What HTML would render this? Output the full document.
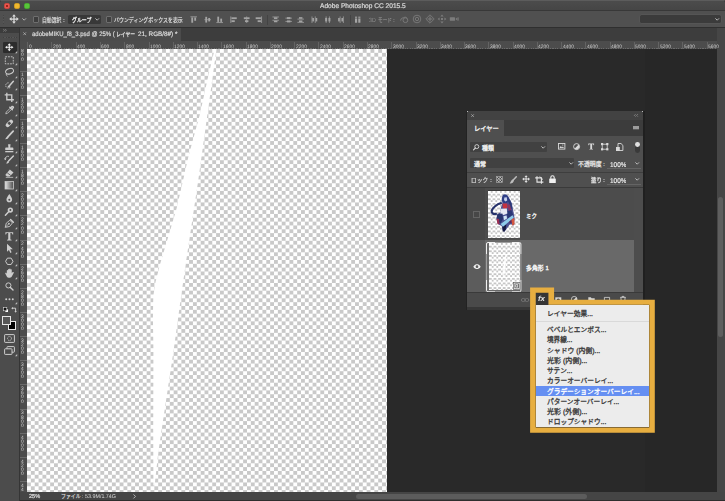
<!DOCTYPE html>
<html lang="ja"><head><meta charset="utf-8"><title>Adobe Photoshop CC 2015.5</title>
<style>
html,body{margin:0;padding:0;width:725px;height:501px;overflow:hidden;background:#272727}
#app{position:absolute;left:0;top:0;width:725px;height:501px;overflow:hidden;background:#272727;font-family:"Liberation Sans",sans-serif}
.b,.jp,.lt,.ic{position:absolute;display:block}
.jp{overflow:visible}
.jp text{font-family:"Liberation Sans","Noto Sans CJK JP",sans-serif;font-size:1000px;font-weight:400}
.lt{white-space:pre;letter-spacing:0;transform-origin:0 0;text-rendering:geometricPrecision;font-kerning:none;will-change:transform}
.ic{overflow:visible;fill:none;stroke:none}
.ck{background:conic-gradient(#c9c9c9 25%,#fff 0 50%,#c9c9c9 0 75%,#fff 0);background-size:7.72px 7.68px}
</style></head>
<body>
<div id="app">
<style>.ck2{background:conic-gradient(#c6c6c6 25%,#fff 0 50%,#c6c6c6 0 75%,#fff 0);background-size:4.6px 4.6px}</style>
<div class="b" style="left:387.10px;top:49.00px;width:258.40px;height:443.00px;background:#292929;"></div>
<div class="b" style="left:645.50px;top:49.00px;width:71.50px;height:443.00px;background:#272727;"></div>
<div class="b" style="left:717.00px;top:27.60px;width:8.00px;height:473.40px;background:#464646;"></div>
<div class="b" style="left:19.50px;top:491.70px;width:705.50px;height:8.60px;background:#454545;"></div>
<div class="b" style="left:0.00px;top:500.20px;width:725.00px;height:0.80px;background:#2e2e2e;"></div>
<div class="b" style="left:355.80px;top:494.00px;width:231.00px;height:5.20px;background:#5c5c5c;border-radius:2.6px"></div>
<div class="b" style="left:718.00px;top:197.00px;width:5.00px;height:140.00px;background:#5e5e5e;border-radius:2.5px"></div>
<span class="lt" style="left:29.00px;top:492.52px;font-size:58.0px;line-height:69.6px;color:#e0e0e0;font-weight:400;transform:scale(0.09647,0.100);-webkit-text-stroke:2.00px #e0e0e0;">25%</span>
<svg class="jp" role="img" aria-label="ファイル" viewBox="0 -880 4000 1000" preserveAspectRatio="none" style="left:61.00px;top:493.30px;width:19.60px;height:5.40px;fill:#d8d8d8;stroke:#d8d8d8;stroke-width:35"><title>ファイル</title><text x="0" y="0" textLength="4000" lengthAdjust="spacingAndGlyphs">ファイル</text></svg>
<span class="lt" style="left:82.20px;top:492.64px;font-size:56.0px;line-height:67.2px;color:#d8d8d8;font-weight:400;transform:scale(0.09581,0.100);">: 53.9M/1.74G</span>
<svg class="ic" viewBox="0 0 3 4.8" style="left:133.40px;top:493.60px;width:3.00px;height:4.80px;"><path d="M.5.4 2.5 2.4 .5 4.4" stroke="#d0d0d0" stroke-width=".8"/></svg>
<div class="b ck" style="left:27.1px;top:49px;width:359.8px;height:442.8px"></div>
<svg class="ic" viewBox="27.1 49 359.8 442.8" style="left:27.10px;top:49.00px;width:359.80px;height:442.80px;"><path fill="#fff" d="M214.8 49H216.6L198.4 180 186.4 260 180.4 302 173.8 350 162.3 426 158.3 453 156 474 154.7 485.5 153.5 485.5 153.3 430 153.5 350 153 318 153.4 296 155.6 282 160.2 264 168.6 236 176.8 208 182.8 182 188.4 157 199.8 115 208.6 75Z"/></svg>
<div class="b" style="left:19.50px;top:41.00px;width:697.50px;height:8.00px;background:#4c4c4c;"></div>
<div class="b" style="left:19.50px;top:48.40px;width:697.50px;height:0.80px;background:repeating-linear-gradient(90deg,#6c6c6c 0 1.2px,#4c4c4c 1.2px 2.42px);"></div>
<div class="b" style="left:27.20px;top:41.50px;width:0.70px;height:7.20px;background:#636363;"></div>
<span class="lt" style="left:28.60px;top:43.36px;font-size:49.0px;line-height:58.8px;color:#cdcdcd;font-weight:400;transform:scale(0.10000,0.100);">0</span>
<div class="b" style="left:51.47px;top:41.50px;width:0.70px;height:7.20px;background:#636363;"></div>
<span class="lt" style="left:52.87px;top:43.36px;font-size:49.0px;line-height:58.8px;color:#cdcdcd;font-weight:400;transform:scale(0.10000,0.100);">200</span>
<div class="b" style="left:75.74px;top:41.50px;width:0.70px;height:7.20px;background:#636363;"></div>
<span class="lt" style="left:77.14px;top:43.36px;font-size:49.0px;line-height:58.8px;color:#cdcdcd;font-weight:400;transform:scale(0.10000,0.100);">400</span>
<div class="b" style="left:100.01px;top:41.50px;width:0.70px;height:7.20px;background:#636363;"></div>
<span class="lt" style="left:101.41px;top:43.36px;font-size:49.0px;line-height:58.8px;color:#cdcdcd;font-weight:400;transform:scale(0.10000,0.100);">600</span>
<div class="b" style="left:124.28px;top:41.50px;width:0.70px;height:7.20px;background:#636363;"></div>
<span class="lt" style="left:125.68px;top:43.36px;font-size:49.0px;line-height:58.8px;color:#cdcdcd;font-weight:400;transform:scale(0.10000,0.100);">800</span>
<div class="b" style="left:148.55px;top:41.50px;width:0.70px;height:7.20px;background:#636363;"></div>
<span class="lt" style="left:149.95px;top:43.36px;font-size:49.0px;line-height:58.8px;color:#cdcdcd;font-weight:400;transform:scale(0.10000,0.100);">1000</span>
<div class="b" style="left:172.82px;top:41.50px;width:0.70px;height:7.20px;background:#636363;"></div>
<span class="lt" style="left:174.22px;top:43.36px;font-size:49.0px;line-height:58.8px;color:#cdcdcd;font-weight:400;transform:scale(0.10000,0.100);">1200</span>
<div class="b" style="left:197.09px;top:41.50px;width:0.70px;height:7.20px;background:#636363;"></div>
<span class="lt" style="left:198.49px;top:43.36px;font-size:49.0px;line-height:58.8px;color:#cdcdcd;font-weight:400;transform:scale(0.10000,0.100);">1400</span>
<div class="b" style="left:221.36px;top:41.50px;width:0.70px;height:7.20px;background:#636363;"></div>
<span class="lt" style="left:222.76px;top:43.36px;font-size:49.0px;line-height:58.8px;color:#cdcdcd;font-weight:400;transform:scale(0.10000,0.100);">1600</span>
<div class="b" style="left:245.63px;top:41.50px;width:0.70px;height:7.20px;background:#636363;"></div>
<span class="lt" style="left:247.03px;top:43.36px;font-size:49.0px;line-height:58.8px;color:#cdcdcd;font-weight:400;transform:scale(0.10000,0.100);">1800</span>
<div class="b" style="left:269.90px;top:41.50px;width:0.70px;height:7.20px;background:#636363;"></div>
<span class="lt" style="left:271.30px;top:43.36px;font-size:49.0px;line-height:58.8px;color:#cdcdcd;font-weight:400;transform:scale(0.10000,0.100);">2000</span>
<div class="b" style="left:294.17px;top:41.50px;width:0.70px;height:7.20px;background:#636363;"></div>
<span class="lt" style="left:295.57px;top:43.36px;font-size:49.0px;line-height:58.8px;color:#cdcdcd;font-weight:400;transform:scale(0.10000,0.100);">2200</span>
<div class="b" style="left:318.44px;top:41.50px;width:0.70px;height:7.20px;background:#636363;"></div>
<span class="lt" style="left:319.84px;top:43.36px;font-size:49.0px;line-height:58.8px;color:#cdcdcd;font-weight:400;transform:scale(0.10000,0.100);">2400</span>
<div class="b" style="left:342.71px;top:41.50px;width:0.70px;height:7.20px;background:#636363;"></div>
<span class="lt" style="left:344.11px;top:43.36px;font-size:49.0px;line-height:58.8px;color:#cdcdcd;font-weight:400;transform:scale(0.10000,0.100);">2600</span>
<div class="b" style="left:366.98px;top:41.50px;width:0.70px;height:7.20px;background:#636363;"></div>
<span class="lt" style="left:368.38px;top:43.36px;font-size:49.0px;line-height:58.8px;color:#cdcdcd;font-weight:400;transform:scale(0.10000,0.100);">2800</span>
<div class="b" style="left:391.25px;top:41.50px;width:0.70px;height:7.20px;background:#636363;"></div>
<span class="lt" style="left:392.65px;top:43.36px;font-size:49.0px;line-height:58.8px;color:#cdcdcd;font-weight:400;transform:scale(0.10000,0.100);">3000</span>
<div class="b" style="left:415.52px;top:41.50px;width:0.70px;height:7.20px;background:#636363;"></div>
<span class="lt" style="left:416.92px;top:43.36px;font-size:49.0px;line-height:58.8px;color:#cdcdcd;font-weight:400;transform:scale(0.10000,0.100);">3200</span>
<div class="b" style="left:439.79px;top:41.50px;width:0.70px;height:7.20px;background:#636363;"></div>
<span class="lt" style="left:441.19px;top:43.36px;font-size:49.0px;line-height:58.8px;color:#cdcdcd;font-weight:400;transform:scale(0.10000,0.100);">3400</span>
<div class="b" style="left:464.06px;top:41.50px;width:0.70px;height:7.20px;background:#636363;"></div>
<span class="lt" style="left:465.46px;top:43.36px;font-size:49.0px;line-height:58.8px;color:#cdcdcd;font-weight:400;transform:scale(0.10000,0.100);">3600</span>
<div class="b" style="left:488.33px;top:41.50px;width:0.70px;height:7.20px;background:#636363;"></div>
<span class="lt" style="left:489.73px;top:43.36px;font-size:49.0px;line-height:58.8px;color:#cdcdcd;font-weight:400;transform:scale(0.10000,0.100);">3800</span>
<div class="b" style="left:512.60px;top:41.50px;width:0.70px;height:7.20px;background:#636363;"></div>
<span class="lt" style="left:514.00px;top:43.36px;font-size:49.0px;line-height:58.8px;color:#cdcdcd;font-weight:400;transform:scale(0.10000,0.100);">4000</span>
<div class="b" style="left:536.87px;top:41.50px;width:0.70px;height:7.20px;background:#636363;"></div>
<span class="lt" style="left:538.27px;top:43.36px;font-size:49.0px;line-height:58.8px;color:#cdcdcd;font-weight:400;transform:scale(0.10000,0.100);">4200</span>
<div class="b" style="left:561.14px;top:41.50px;width:0.70px;height:7.20px;background:#636363;"></div>
<span class="lt" style="left:562.54px;top:43.36px;font-size:49.0px;line-height:58.8px;color:#cdcdcd;font-weight:400;transform:scale(0.10000,0.100);">4400</span>
<div class="b" style="left:585.41px;top:41.50px;width:0.70px;height:7.20px;background:#636363;"></div>
<span class="lt" style="left:586.81px;top:43.36px;font-size:49.0px;line-height:58.8px;color:#cdcdcd;font-weight:400;transform:scale(0.10000,0.100);">4600</span>
<div class="b" style="left:609.68px;top:41.50px;width:0.70px;height:7.20px;background:#636363;"></div>
<span class="lt" style="left:611.08px;top:43.36px;font-size:49.0px;line-height:58.8px;color:#cdcdcd;font-weight:400;transform:scale(0.10000,0.100);">4800</span>
<div class="b" style="left:633.95px;top:41.50px;width:0.70px;height:7.20px;background:#636363;"></div>
<span class="lt" style="left:635.35px;top:43.36px;font-size:49.0px;line-height:58.8px;color:#cdcdcd;font-weight:400;transform:scale(0.10000,0.100);">5000</span>
<div class="b" style="left:658.22px;top:41.50px;width:0.70px;height:7.20px;background:#636363;"></div>
<span class="lt" style="left:659.62px;top:43.36px;font-size:49.0px;line-height:58.8px;color:#cdcdcd;font-weight:400;transform:scale(0.10000,0.100);">5200</span>
<div class="b" style="left:682.49px;top:41.50px;width:0.70px;height:7.20px;background:#636363;"></div>
<span class="lt" style="left:683.89px;top:43.36px;font-size:49.0px;line-height:58.8px;color:#cdcdcd;font-weight:400;transform:scale(0.10000,0.100);">5400</span>
<div class="b" style="left:706.76px;top:41.50px;width:0.70px;height:7.20px;background:#636363;"></div>
<span class="lt" style="left:708.16px;top:43.36px;font-size:49.0px;line-height:58.8px;color:#cdcdcd;font-weight:400;transform:scale(0.10000,0.100);">5600</span>
<div class="b" style="left:19.50px;top:49.00px;width:7.80px;height:443.00px;background:#4c4c4c;"></div>
<div class="b" style="left:26.60px;top:49.00px;width:0.80px;height:443.00px;background:repeating-linear-gradient(0deg,#6c6c6c 0 1.2px,#4c4c4c 1.2px 2.42px);"></div>
<span class="lt" style="left:20.80px;top:47.32px;font-size:49.0px;line-height:58.8px;color:#cecece;font-weight:400;transform:scale(0.10000,0.100);">8</span>
<span class="lt" style="left:20.80px;top:51.42px;font-size:49.0px;line-height:58.8px;color:#cecece;font-weight:400;transform:scale(0.10000,0.100);">0</span>
<span class="lt" style="left:20.80px;top:55.52px;font-size:49.0px;line-height:58.8px;color:#cecece;font-weight:400;transform:scale(0.10000,0.100);">0</span>
<div class="b" style="left:20.00px;top:70.60px;width:7.00px;height:0.70px;background:#6a6a6a;"></div>
<span class="lt" style="left:20.80px;top:71.46px;font-size:49.0px;line-height:58.8px;color:#cecece;font-weight:400;transform:scale(0.10000,0.100);">1</span>
<span class="lt" style="left:20.80px;top:75.56px;font-size:49.0px;line-height:58.8px;color:#cecece;font-weight:400;transform:scale(0.10000,0.100);">0</span>
<span class="lt" style="left:20.80px;top:79.66px;font-size:49.0px;line-height:58.8px;color:#cecece;font-weight:400;transform:scale(0.10000,0.100);">0</span>
<span class="lt" style="left:20.80px;top:83.76px;font-size:49.0px;line-height:58.8px;color:#cecece;font-weight:400;transform:scale(0.10000,0.100);">0</span>
<div class="b" style="left:20.00px;top:94.74px;width:7.00px;height:0.70px;background:#6a6a6a;"></div>
<span class="lt" style="left:20.80px;top:95.60px;font-size:49.0px;line-height:58.8px;color:#cecece;font-weight:400;transform:scale(0.10000,0.100);">1</span>
<span class="lt" style="left:20.80px;top:99.70px;font-size:49.0px;line-height:58.8px;color:#cecece;font-weight:400;transform:scale(0.10000,0.100);">2</span>
<span class="lt" style="left:20.80px;top:103.80px;font-size:49.0px;line-height:58.8px;color:#cecece;font-weight:400;transform:scale(0.10000,0.100);">0</span>
<span class="lt" style="left:20.80px;top:107.90px;font-size:49.0px;line-height:58.8px;color:#cecece;font-weight:400;transform:scale(0.10000,0.100);">0</span>
<div class="b" style="left:20.00px;top:118.88px;width:7.00px;height:0.70px;background:#6a6a6a;"></div>
<span class="lt" style="left:20.80px;top:119.74px;font-size:49.0px;line-height:58.8px;color:#cecece;font-weight:400;transform:scale(0.10000,0.100);">1</span>
<span class="lt" style="left:20.80px;top:123.84px;font-size:49.0px;line-height:58.8px;color:#cecece;font-weight:400;transform:scale(0.10000,0.100);">4</span>
<span class="lt" style="left:20.80px;top:127.94px;font-size:49.0px;line-height:58.8px;color:#cecece;font-weight:400;transform:scale(0.10000,0.100);">0</span>
<span class="lt" style="left:20.80px;top:132.04px;font-size:49.0px;line-height:58.8px;color:#cecece;font-weight:400;transform:scale(0.10000,0.100);">0</span>
<div class="b" style="left:20.00px;top:143.02px;width:7.00px;height:0.70px;background:#6a6a6a;"></div>
<span class="lt" style="left:20.80px;top:143.88px;font-size:49.0px;line-height:58.8px;color:#cecece;font-weight:400;transform:scale(0.10000,0.100);">1</span>
<span class="lt" style="left:20.80px;top:147.98px;font-size:49.0px;line-height:58.8px;color:#cecece;font-weight:400;transform:scale(0.10000,0.100);">6</span>
<span class="lt" style="left:20.80px;top:152.08px;font-size:49.0px;line-height:58.8px;color:#cecece;font-weight:400;transform:scale(0.10000,0.100);">0</span>
<span class="lt" style="left:20.80px;top:156.18px;font-size:49.0px;line-height:58.8px;color:#cecece;font-weight:400;transform:scale(0.10000,0.100);">0</span>
<div class="b" style="left:20.00px;top:167.16px;width:7.00px;height:0.70px;background:#6a6a6a;"></div>
<span class="lt" style="left:20.80px;top:168.02px;font-size:49.0px;line-height:58.8px;color:#cecece;font-weight:400;transform:scale(0.10000,0.100);">1</span>
<span class="lt" style="left:20.80px;top:172.12px;font-size:49.0px;line-height:58.8px;color:#cecece;font-weight:400;transform:scale(0.10000,0.100);">8</span>
<span class="lt" style="left:20.80px;top:176.22px;font-size:49.0px;line-height:58.8px;color:#cecece;font-weight:400;transform:scale(0.10000,0.100);">0</span>
<span class="lt" style="left:20.80px;top:180.32px;font-size:49.0px;line-height:58.8px;color:#cecece;font-weight:400;transform:scale(0.10000,0.100);">0</span>
<div class="b" style="left:20.00px;top:191.30px;width:7.00px;height:0.70px;background:#6a6a6a;"></div>
<span class="lt" style="left:20.80px;top:192.16px;font-size:49.0px;line-height:58.8px;color:#cecece;font-weight:400;transform:scale(0.10000,0.100);">2</span>
<span class="lt" style="left:20.80px;top:196.26px;font-size:49.0px;line-height:58.8px;color:#cecece;font-weight:400;transform:scale(0.10000,0.100);">0</span>
<span class="lt" style="left:20.80px;top:200.36px;font-size:49.0px;line-height:58.8px;color:#cecece;font-weight:400;transform:scale(0.10000,0.100);">0</span>
<span class="lt" style="left:20.80px;top:204.46px;font-size:49.0px;line-height:58.8px;color:#cecece;font-weight:400;transform:scale(0.10000,0.100);">0</span>
<div class="b" style="left:20.00px;top:215.44px;width:7.00px;height:0.70px;background:#6a6a6a;"></div>
<span class="lt" style="left:20.80px;top:216.30px;font-size:49.0px;line-height:58.8px;color:#cecece;font-weight:400;transform:scale(0.10000,0.100);">2</span>
<span class="lt" style="left:20.80px;top:220.40px;font-size:49.0px;line-height:58.8px;color:#cecece;font-weight:400;transform:scale(0.10000,0.100);">2</span>
<span class="lt" style="left:20.80px;top:224.50px;font-size:49.0px;line-height:58.8px;color:#cecece;font-weight:400;transform:scale(0.10000,0.100);">0</span>
<span class="lt" style="left:20.80px;top:228.60px;font-size:49.0px;line-height:58.8px;color:#cecece;font-weight:400;transform:scale(0.10000,0.100);">0</span>
<div class="b" style="left:20.00px;top:239.58px;width:7.00px;height:0.70px;background:#6a6a6a;"></div>
<span class="lt" style="left:20.80px;top:240.44px;font-size:49.0px;line-height:58.8px;color:#cecece;font-weight:400;transform:scale(0.10000,0.100);">2</span>
<span class="lt" style="left:20.80px;top:244.54px;font-size:49.0px;line-height:58.8px;color:#cecece;font-weight:400;transform:scale(0.10000,0.100);">4</span>
<span class="lt" style="left:20.80px;top:248.64px;font-size:49.0px;line-height:58.8px;color:#cecece;font-weight:400;transform:scale(0.10000,0.100);">0</span>
<span class="lt" style="left:20.80px;top:252.74px;font-size:49.0px;line-height:58.8px;color:#cecece;font-weight:400;transform:scale(0.10000,0.100);">0</span>
<div class="b" style="left:20.00px;top:263.72px;width:7.00px;height:0.70px;background:#6a6a6a;"></div>
<span class="lt" style="left:20.80px;top:264.58px;font-size:49.0px;line-height:58.8px;color:#cecece;font-weight:400;transform:scale(0.10000,0.100);">2</span>
<span class="lt" style="left:20.80px;top:268.68px;font-size:49.0px;line-height:58.8px;color:#cecece;font-weight:400;transform:scale(0.10000,0.100);">6</span>
<span class="lt" style="left:20.80px;top:272.78px;font-size:49.0px;line-height:58.8px;color:#cecece;font-weight:400;transform:scale(0.10000,0.100);">0</span>
<span class="lt" style="left:20.80px;top:276.88px;font-size:49.0px;line-height:58.8px;color:#cecece;font-weight:400;transform:scale(0.10000,0.100);">0</span>
<div class="b" style="left:20.00px;top:287.86px;width:7.00px;height:0.70px;background:#6a6a6a;"></div>
<span class="lt" style="left:20.80px;top:288.72px;font-size:49.0px;line-height:58.8px;color:#cecece;font-weight:400;transform:scale(0.10000,0.100);">2</span>
<span class="lt" style="left:20.80px;top:292.82px;font-size:49.0px;line-height:58.8px;color:#cecece;font-weight:400;transform:scale(0.10000,0.100);">8</span>
<span class="lt" style="left:20.80px;top:296.92px;font-size:49.0px;line-height:58.8px;color:#cecece;font-weight:400;transform:scale(0.10000,0.100);">0</span>
<span class="lt" style="left:20.80px;top:301.02px;font-size:49.0px;line-height:58.8px;color:#cecece;font-weight:400;transform:scale(0.10000,0.100);">0</span>
<div class="b" style="left:20.00px;top:312.00px;width:7.00px;height:0.70px;background:#6a6a6a;"></div>
<span class="lt" style="left:20.80px;top:312.86px;font-size:49.0px;line-height:58.8px;color:#cecece;font-weight:400;transform:scale(0.10000,0.100);">3</span>
<span class="lt" style="left:20.80px;top:316.96px;font-size:49.0px;line-height:58.8px;color:#cecece;font-weight:400;transform:scale(0.10000,0.100);">0</span>
<span class="lt" style="left:20.80px;top:321.06px;font-size:49.0px;line-height:58.8px;color:#cecece;font-weight:400;transform:scale(0.10000,0.100);">0</span>
<span class="lt" style="left:20.80px;top:325.16px;font-size:49.0px;line-height:58.8px;color:#cecece;font-weight:400;transform:scale(0.10000,0.100);">0</span>
<div class="b" style="left:20.00px;top:336.14px;width:7.00px;height:0.70px;background:#6a6a6a;"></div>
<span class="lt" style="left:20.80px;top:337.00px;font-size:49.0px;line-height:58.8px;color:#cecece;font-weight:400;transform:scale(0.10000,0.100);">3</span>
<span class="lt" style="left:20.80px;top:341.10px;font-size:49.0px;line-height:58.8px;color:#cecece;font-weight:400;transform:scale(0.10000,0.100);">2</span>
<span class="lt" style="left:20.80px;top:345.20px;font-size:49.0px;line-height:58.8px;color:#cecece;font-weight:400;transform:scale(0.10000,0.100);">0</span>
<span class="lt" style="left:20.80px;top:349.30px;font-size:49.0px;line-height:58.8px;color:#cecece;font-weight:400;transform:scale(0.10000,0.100);">0</span>
<div class="b" style="left:20.00px;top:360.28px;width:7.00px;height:0.70px;background:#6a6a6a;"></div>
<span class="lt" style="left:20.80px;top:361.14px;font-size:49.0px;line-height:58.8px;color:#cecece;font-weight:400;transform:scale(0.10000,0.100);">3</span>
<span class="lt" style="left:20.80px;top:365.24px;font-size:49.0px;line-height:58.8px;color:#cecece;font-weight:400;transform:scale(0.10000,0.100);">4</span>
<span class="lt" style="left:20.80px;top:369.34px;font-size:49.0px;line-height:58.8px;color:#cecece;font-weight:400;transform:scale(0.10000,0.100);">0</span>
<span class="lt" style="left:20.80px;top:373.44px;font-size:49.0px;line-height:58.8px;color:#cecece;font-weight:400;transform:scale(0.10000,0.100);">0</span>
<div class="b" style="left:20.00px;top:384.42px;width:7.00px;height:0.70px;background:#6a6a6a;"></div>
<span class="lt" style="left:20.80px;top:385.28px;font-size:49.0px;line-height:58.8px;color:#cecece;font-weight:400;transform:scale(0.10000,0.100);">3</span>
<span class="lt" style="left:20.80px;top:389.38px;font-size:49.0px;line-height:58.8px;color:#cecece;font-weight:400;transform:scale(0.10000,0.100);">6</span>
<span class="lt" style="left:20.80px;top:393.48px;font-size:49.0px;line-height:58.8px;color:#cecece;font-weight:400;transform:scale(0.10000,0.100);">0</span>
<span class="lt" style="left:20.80px;top:397.58px;font-size:49.0px;line-height:58.8px;color:#cecece;font-weight:400;transform:scale(0.10000,0.100);">0</span>
<div class="b" style="left:20.00px;top:408.56px;width:7.00px;height:0.70px;background:#6a6a6a;"></div>
<span class="lt" style="left:20.80px;top:409.42px;font-size:49.0px;line-height:58.8px;color:#cecece;font-weight:400;transform:scale(0.10000,0.100);">3</span>
<span class="lt" style="left:20.80px;top:413.52px;font-size:49.0px;line-height:58.8px;color:#cecece;font-weight:400;transform:scale(0.10000,0.100);">8</span>
<span class="lt" style="left:20.80px;top:417.62px;font-size:49.0px;line-height:58.8px;color:#cecece;font-weight:400;transform:scale(0.10000,0.100);">0</span>
<span class="lt" style="left:20.80px;top:421.72px;font-size:49.0px;line-height:58.8px;color:#cecece;font-weight:400;transform:scale(0.10000,0.100);">0</span>
<div class="b" style="left:20.00px;top:432.70px;width:7.00px;height:0.70px;background:#6a6a6a;"></div>
<span class="lt" style="left:20.80px;top:433.56px;font-size:49.0px;line-height:58.8px;color:#cecece;font-weight:400;transform:scale(0.10000,0.100);">4</span>
<span class="lt" style="left:20.80px;top:437.66px;font-size:49.0px;line-height:58.8px;color:#cecece;font-weight:400;transform:scale(0.10000,0.100);">0</span>
<span class="lt" style="left:20.80px;top:441.76px;font-size:49.0px;line-height:58.8px;color:#cecece;font-weight:400;transform:scale(0.10000,0.100);">0</span>
<span class="lt" style="left:20.80px;top:445.86px;font-size:49.0px;line-height:58.8px;color:#cecece;font-weight:400;transform:scale(0.10000,0.100);">0</span>
<div class="b" style="left:20.00px;top:456.84px;width:7.00px;height:0.70px;background:#6a6a6a;"></div>
<span class="lt" style="left:20.80px;top:457.70px;font-size:49.0px;line-height:58.8px;color:#cecece;font-weight:400;transform:scale(0.10000,0.100);">4</span>
<span class="lt" style="left:20.80px;top:461.80px;font-size:49.0px;line-height:58.8px;color:#cecece;font-weight:400;transform:scale(0.10000,0.100);">2</span>
<span class="lt" style="left:20.80px;top:465.90px;font-size:49.0px;line-height:58.8px;color:#cecece;font-weight:400;transform:scale(0.10000,0.100);">0</span>
<span class="lt" style="left:20.80px;top:470.00px;font-size:49.0px;line-height:58.8px;color:#cecece;font-weight:400;transform:scale(0.10000,0.100);">0</span>
<div class="b" style="left:20.00px;top:480.98px;width:7.00px;height:0.70px;background:#6a6a6a;"></div>
<span class="lt" style="left:20.80px;top:481.84px;font-size:49.0px;line-height:58.8px;color:#cecece;font-weight:400;transform:scale(0.10000,0.100);">4</span>
<span class="lt" style="left:20.80px;top:485.94px;font-size:49.0px;line-height:58.8px;color:#cecece;font-weight:400;transform:scale(0.10000,0.100);">4</span>
<div class="b" style="left:19.50px;top:41.00px;width:7.80px;height:8.00px;background:#4c4c4c;"></div>
<div class="b" style="left:0.00px;top:0.00px;width:725.00px;height:11.00px;background:linear-gradient(#4c4c4c,#454545);border-radius:3px 3px 0 0"></div>
<div class="b" style="left:0.00px;top:0.00px;width:725.00px;height:0.80px;background:#5c5c5c;border-radius:3px 3px 0 0"></div>
<div class="b" style="left:0.00px;top:10.30px;width:725.00px;height:0.80px;background:#383838;"></div>
<div class="b" style="left:4.30px;top:3.30px;width:5.80px;height:5.80px;background:#e9564e;border-radius:50%;box-shadow:inset 0 0 0 .5px #b8423b"></div>
<div class="b" style="left:14.10px;top:3.30px;width:5.80px;height:5.80px;background:#eeb72e;border-radius:50%;box-shadow:inset 0 0 0 .5px #b98c22"></div>
<div class="b" style="left:23.90px;top:3.30px;width:5.80px;height:5.80px;background:#58c43a;border-radius:50%;box-shadow:inset 0 0 0 .5px #429a2b"></div>
<div class="b" style="left:6.40px;top:5.40px;width:1.60px;height:1.60px;background:#8c1a10;border-radius:50%"></div>
<span class="lt" style="left:319.90px;top:1.52px;font-size:68.0px;line-height:81.6px;color:#d4d4d4;font-weight:400;transform:scale(0.09687,0.100);-webkit-text-stroke:2.50px #d4d4d4;">Adobe Photoshop CC 2015.5</span>
<div class="b" style="left:0.00px;top:11.00px;width:725.00px;height:16.30px;background:#505050;"></div>
<div class="b" style="left:0.00px;top:27.00px;width:725.00px;height:0.80px;background:#2f2f2f;"></div>
<div class="b" style="left:2.60px;top:14.50px;width:1.20px;height:9.50px;background:repeating-linear-gradient(0deg,#454545 0 .8px,#565656 .8px 1.6px);"></div>
<svg class="ic" viewBox="0 0 12 12" style="left:8.80px;top:14.40px;width:10.00px;height:10.00px;"><path fill="#dcdcdc" d="M6 .3 8.3 3.1H6.75V5.25H8.9V3.7L11.7 6 8.9 8.3V6.75H6.75V8.9H8.3L6 11.7 3.7 8.9H5.25V6.75H3.1V8.3L.3 6 3.1 3.7V5.25H5.25V3.1H3.7Z"/></svg>
<svg class="ic" viewBox="0 0 4.4 3" style="left:22.00px;top:18.00px;width:4.40px;height:3.00px;"><path d="M.4.4 2.2 2.2 4 .4" stroke="#bbb" stroke-width=".9"/></svg>
<div class="b" style="left:33.00px;top:16.40px;width:6.20px;height:6.20px;background:#3e3e3e;border:.7px solid #6e6e6e;box-sizing:border-box;border-radius:1px"></div>
<svg class="jp" role="img" aria-label="自動選択" viewBox="0 -880 4000 1000" preserveAspectRatio="none" style="left:41.60px;top:16.80px;width:19.40px;height:5.40px;fill:#dcdcdc;stroke:#dcdcdc;stroke-width:35"><title>自動選択</title><text x="0" y="0" textLength="4000" lengthAdjust="spacingAndGlyphs">自動選択</text></svg>
<svg class="jp" role="img" aria-label=":" viewBox="0 -880 278 1000" preserveAspectRatio="none" style="left:62.60px;top:16.80px;width:1.80px;height:5.40px;fill:#dcdcdc;stroke:#dcdcdc;stroke-width:35"><title>:</title><text x="0" y="0">:</text></svg>
<div class="b" style="left:67.60px;top:14.80px;width:33.60px;height:9.00px;background:#383838;border-radius:1.5px"></div>
<svg class="jp" role="img" aria-label="グループ" viewBox="0 -880 4000 1000" preserveAspectRatio="none" style="left:71.50px;top:16.80px;width:19.30px;height:5.40px;fill:#efefef;stroke:#efefef;stroke-width:55"><title>グループ</title><text x="0" y="0" textLength="4000" lengthAdjust="spacingAndGlyphs">グループ</text></svg>
<svg class="ic" viewBox="0 0 4.4 3" style="left:95.20px;top:18.20px;width:4.40px;height:3.00px;"><path d="M.4.4 2.2 2.2 4 .4" stroke="#c8c8c8" stroke-width=".9"/></svg>
<div class="b" style="left:105.80px;top:16.40px;width:6.20px;height:6.20px;background:#3e3e3e;border:.7px solid #6e6e6e;box-sizing:border-box;border-radius:1px"></div>
<svg class="jp" role="img" aria-label="バウンディングボックスを表示" viewBox="0 -880 14000 1000" preserveAspectRatio="none" style="left:114.00px;top:16.80px;width:68.80px;height:5.40px;fill:#dcdcdc;stroke:#dcdcdc;stroke-width:35"><title>バウンディングボックスを表示</title><text x="0" y="0" textLength="14000" lengthAdjust="spacingAndGlyphs">バウンディングボックスを表示</text></svg>
<svg class="ic" viewBox="0 0 9 9" style="left:190.30px;top:15.60px;width:7.40px;height:7.40px;"><path d="M.5 1H8.5" stroke="#a4a4a4" stroke-width="1"/><rect x="1.6" y="1.8" width="2.2" height="6.4" fill="#a4a4a4"/><rect x="5.2" y="1.8" width="2.2" height="4" fill="#a4a4a4"/></svg>
<svg class="ic" viewBox="0 0 9 9" style="left:203.60px;top:15.60px;width:7.40px;height:7.40px;"><path d="M.5 4.5H8.5" stroke="#a4a4a4" stroke-width=".9"/><rect x="1.6" y="1" width="2.2" height="7" fill="#a4a4a4"/><rect x="5.2" y="2.4" width="2.2" height="4.2" fill="#a4a4a4"/></svg>
<svg class="ic" viewBox="0 0 9 9" style="left:215.70px;top:15.60px;width:7.40px;height:7.40px;"><path d="M.5 8H8.5" stroke="#a4a4a4" stroke-width="1"/><rect x="1.6" y=".8" width="2.2" height="6.4" fill="#a4a4a4"/><rect x="5.2" y="3.2" width="2.2" height="4" fill="#a4a4a4"/></svg>
<svg class="ic" viewBox="0 0 9 9" style="left:230.10px;top:15.60px;width:7.40px;height:7.40px;"><path d="M1 .5V8.5" stroke="#a4a4a4" stroke-width="1"/><rect x="1.8" y="1.6" width="6.4" height="2.2" fill="#a4a4a4"/><rect x="1.8" y="5.2" width="4" height="2.2" fill="#a4a4a4"/></svg>
<svg class="ic" viewBox="0 0 9 9" style="left:243.30px;top:15.60px;width:7.40px;height:7.40px;"><path d="M4.5 .5V8.5" stroke="#a4a4a4" stroke-width=".9"/><rect x="1" y="1.6" width="7" height="2.2" fill="#a4a4a4"/><rect x="2.4" y="5.2" width="4.2" height="2.2" fill="#a4a4a4"/></svg>
<svg class="ic" viewBox="0 0 9 9" style="left:254.90px;top:15.60px;width:7.40px;height:7.40px;"><path d="M8 .5V8.5" stroke="#a4a4a4" stroke-width="1"/><rect x=".8" y="1.6" width="6.4" height="2.2" fill="#a4a4a4"/><rect x="3.2" y="5.2" width="4" height="2.2" fill="#a4a4a4"/></svg>
<div class="b" style="left:266.80px;top:14.50px;width:0.80px;height:10.00px;background:#434343;"></div>
<svg class="ic" viewBox="0 0 9 9" style="left:271.60px;top:15.60px;width:7.40px;height:7.40px;"><path d="M.5 1.2H8.5M.5 5.2H8.5" stroke="#a4a4a4" stroke-width=".9"/><rect x="2.4" y="1.6" width="4.2" height="2" fill="#a4a4a4"/><rect x="2.4" y="5.6" width="4.2" height="2" fill="#a4a4a4"/></svg>
<svg class="ic" viewBox="0 0 9 9" style="left:284.50px;top:15.60px;width:7.40px;height:7.40px;"><path d="M.5 2.6H8.5M.5 6.6H8.5" stroke="#a4a4a4" stroke-width=".9"/><rect x="2.4" y="1.4" width="4.2" height="2.4" fill="#a4a4a4"/><rect x="2.4" y="5.4" width="4.2" height="2.4" fill="#a4a4a4"/></svg>
<svg class="ic" viewBox="0 0 9 9" style="left:296.90px;top:15.60px;width:7.40px;height:7.40px;"><path d="M.5 3.8H8.5M.5 7.8H8.5" stroke="#a4a4a4" stroke-width=".9"/><rect x="2.4" y="1.4" width="4.2" height="2" fill="#a4a4a4"/><rect x="2.4" y="5.4" width="4.2" height="2" fill="#a4a4a4"/></svg>
<svg class="ic" viewBox="0 0 9 9" style="left:311.00px;top:15.60px;width:7.40px;height:7.40px;"><path d="M1.2 .5V8.5M5.2 .5V8.5" stroke="#a4a4a4" stroke-width=".9"/><rect x="1.6" y="2.4" width="2" height="4.2" fill="#a4a4a4"/><rect x="5.6" y="2.4" width="2" height="4.2" fill="#a4a4a4"/></svg>
<svg class="ic" viewBox="0 0 9 9" style="left:323.90px;top:15.60px;width:7.40px;height:7.40px;"><path d="M2.6 .5V8.5M6.6 .5V8.5" stroke="#a4a4a4" stroke-width=".9"/><rect x="1.4" y="2.4" width="2.4" height="4.2" fill="#a4a4a4"/><rect x="5.4" y="2.4" width="2.4" height="4.2" fill="#a4a4a4"/></svg>
<svg class="ic" viewBox="0 0 9 9" style="left:336.60px;top:15.60px;width:7.40px;height:7.40px;"><path d="M3.8 .5V8.5M7.8 .5V8.5" stroke="#a4a4a4" stroke-width=".9"/><rect x="1.4" y="2.4" width="2" height="4.2" fill="#a4a4a4"/><rect x="5.4" y="2.4" width="2" height="4.2" fill="#a4a4a4"/></svg>
<div class="b" style="left:350.00px;top:14.50px;width:0.80px;height:10.00px;background:#434343;"></div>
<svg class="ic" viewBox="0 0 9 9" style="left:354.00px;top:15.60px;width:7.40px;height:7.40px;"><rect x="1.2" y=".8" width="2.6" height="7.4" fill="#a4a4a4"/><rect x="5.2" y=".8" width="2.6" height="7.4" fill="#a4a4a4"/><path d="M.6 2.6H8.4" stroke="#505050" stroke-width=".8"/></svg>
<span class="lt" style="left:369.00px;top:15.80px;font-size:60.0px;line-height:72.0px;color:#8c8c8c;font-weight:400;transform:scale(0.08865,0.100);">3D</span>
<svg class="jp" role="img" aria-label="モード" viewBox="0 -880 3000 1000" preserveAspectRatio="none" style="left:377.60px;top:16.70px;width:14.00px;height:5.40px;fill:#8c8c8c;stroke:#8c8c8c;stroke-width:35"><title>モード</title><text x="0" y="0" textLength="3000" lengthAdjust="spacingAndGlyphs">モード</text></svg>
<svg class="jp" role="img" aria-label=":" viewBox="0 -880 278 1000" preserveAspectRatio="none" style="left:392.60px;top:16.70px;width:1.80px;height:5.40px;fill:#8c8c8c;stroke:#8c8c8c;stroke-width:35"><title>:</title><text x="0" y="0">:</text></svg>
<svg class="ic" viewBox="0 0 10 10" style="left:399.20px;top:14.00px;width:10.00px;height:10.00px;"><path d="M1.6 6.6A3.4 2 -25 1 1 8 4.4" stroke="#7c7c7c" stroke-width=".9"/><circle cx="6.4" cy="6.2" r="2.4" stroke="#7c7c7c" stroke-width=".9"/></svg>
<svg class="ic" viewBox="0 0 10 10" style="left:411.60px;top:14.00px;width:10.00px;height:10.00px;"><circle cx="5" cy="5" r="3.8" stroke="#7c7c7c" stroke-width=".9"/><circle cx="5" cy="5" r="1.7" stroke="#7c7c7c" stroke-width=".9"/></svg>
<svg class="ic" viewBox="0 0 10 10" style="left:424.50px;top:14.00px;width:10.00px;height:10.00px;"><path d="M5 .8 9.2 5 5 9.2 .8 5Z" stroke="#7c7c7c" stroke-width=".9"/><path d="M5 2.4V7.6M2.4 5H7.6" stroke="#7c7c7c" stroke-width="1"/></svg>
<svg class="ic" viewBox="0 0 10 10" style="left:437.00px;top:14.00px;width:10.00px;height:10.00px;"><path d="M5 .6 6.6 2.6H3.4ZM5 9.4 3.4 7.4H6.6ZM.6 5 2.6 3.4V6.6ZM9.4 5 7.4 6.6V3.4Z" fill="#7c7c7c"/><rect x="4" y="4" width="2" height="2" fill="#7c7c7c"/></svg>
<svg class="ic" viewBox="0 0 10 10" style="left:449.30px;top:14.00px;width:10.00px;height:10.00px;"><rect x=".8" y="3.2" width="5.2" height="3.6" rx=".6" fill="#7c7c7c"/><path d="M6.4 5 8.6 3.2V6.8Z" fill="#7c7c7c"/><path d="M9.4 3.4V6.6" stroke="#7c7c7c" stroke-width=".7"/></svg>
<div class="b" style="left:639.80px;top:14.90px;width:81.60px;height:8.40px;background:#3b3b3b;border-radius:1.5px;box-shadow:0 0 0 .5px #5a5a5a"></div>
<svg class="ic" viewBox="0 0 4.4 3" style="left:715.40px;top:17.80px;width:4.40px;height:3.00px;"><path d="M.4.4 2.2 2.2 4 .4" stroke="#c8c8c8" stroke-width=".9"/></svg>
<div class="b" style="left:19.50px;top:27.60px;width:697.50px;height:13.60px;background:#3d3d3d;"></div>
<div class="b" style="left:20.30px;top:27.80px;width:161.20px;height:13.40px;background:#4b4b4b;"></div>
<svg class="ic" viewBox="0 0 3.4 3.4" style="left:23.40px;top:32.40px;width:3.40px;height:3.40px;"><path d="M.3.3 3.1 3.1M3.1.3 .3 3.1" stroke="#b9b9b9" stroke-width=".7"/></svg>
<span class="lt" style="left:31.80px;top:30.30px;font-size:65.0px;line-height:78.0px;color:#dcdcdc;font-weight:400;transform:scale(0.09193,0.100);-webkit-text-stroke:2.00px #dcdcdc;">adobeMIKU_f8_3.psd @ 25% (</span>
<svg class="jp" role="img" aria-label="レイヤー" viewBox="0 -880 4000 1000" preserveAspectRatio="none" style="left:115.60px;top:31.20px;width:19.20px;height:6.20px;fill:#dcdcdc;stroke:#dcdcdc;stroke-width:50"><title>レイヤー</title><text x="0" y="0" textLength="4000" lengthAdjust="spacingAndGlyphs">レイヤー</text></svg>
<span class="lt" style="left:138.20px;top:30.30px;font-size:65.0px;line-height:78.0px;color:#dcdcdc;font-weight:400;transform:scale(0.09737,0.100);-webkit-text-stroke:2.00px #dcdcdc;">21, RGB/8#) *</span>
<div class="b" style="left:0.00px;top:27.60px;width:19.50px;height:473.40px;background:#4c4c4c;"></div>
<div class="b" style="left:0.00px;top:27.60px;width:19.50px;height:5.60px;background:#3c3c3c;"></div>
<svg class="ic" viewBox="0 0 4 2.6" style="left:3.00px;top:29.20px;width:4.00px;height:2.60px;"><path d="M.3.2 1.5 1.3 .3 2.4M2.2.2 3.4 1.3 2.2 2.4" stroke="#a8a8a8" stroke-width=".6"/></svg>
<div class="b" style="left:3.00px;top:36.60px;width:13.50px;height:1.20px;background:repeating-linear-gradient(90deg,#404040 0 .8px,#565656 .8px 1.6px);"></div>
<div class="b" style="left:19.20px;top:27.60px;width:0.60px;height:473.40px;background:#353535;"></div>
<div class="b" style="left:2.60px;top:41.80px;width:14.00px;height:11.40px;background:#2c2c2c;border-radius:1px"></div>
<svg class="ic" viewBox="0 0 12 12" style="left:4.20px;top:42.20px;width:10.60px;height:10.60px;"><path fill="#f2f2f2" transform="translate(1 1.3) scale(.83 .78)" d="M6 .3 8.3 3.1H6.75V5.25H8.9V3.7L11.7 6 8.9 8.3V6.75H6.75V8.9H8.3L6 11.7 3.7 8.9H5.25V6.75H3.1V8.3L.3 6 3.1 3.7V5.25H5.25V3.1H3.7Z"/></svg>
<svg class="ic" viewBox="0 0 12 12" style="left:4.20px;top:54.77px;width:10.60px;height:10.60px;"><rect x="1.5" y="2" width="9" height="8" stroke="#cdcdcd" stroke-width="1" stroke-dasharray="2 1.1"/></svg>
<svg class="ic" viewBox="0 0 12 12" style="left:4.20px;top:67.34px;width:10.60px;height:10.60px;"><ellipse cx="6.3" cy="4.8" rx="4.6" ry="3" transform="rotate(-20 6.3 4.8)" stroke="#cdcdcd" stroke-width="1.1"/><path d="M3 7.2C2.2 8.3 2.6 9.6 4 10.6" stroke="#cdcdcd" stroke-width="1"/></svg>
<svg class="ic" viewBox="0 0 12 12" style="left:4.20px;top:79.91px;width:10.60px;height:10.60px;"><path d="M5.2 3.2A3 3 0 1 0 7.6 7.6" stroke="#cdcdcd" stroke-width="1" stroke-dasharray="1.6 1"/><path d="M10.6 1.4 6.4 6.2" stroke="#cdcdcd" stroke-width="1.7" stroke-linecap="round"/><circle cx="5.5" cy="7.4" r="1.3" fill="#cdcdcd"/></svg>
<svg class="ic" viewBox="0 0 12 12" style="left:4.20px;top:92.48px;width:10.60px;height:10.60px;"><path d="M3.2 .8V8.8H11.2M.8 3.2H8.8V11.2" stroke="#cdcdcd" stroke-width="1.5"/></svg>
<svg class="ic" viewBox="0 0 12 12" style="left:4.20px;top:105.05px;width:10.60px;height:10.60px;"><path d="M2 10 2.6 8 7 3.6 8.4 5 4 9.4Z" stroke="#cdcdcd" stroke-width=".9"/><path d="M6.6 2.6 9.4 5.4M7.6 3.4 9.2 1.6A1.1 1.1 0 0 1 10.6 3L9 4.6" stroke="#cdcdcd" stroke-width="1.6" stroke-linecap="round"/></svg>
<svg class="ic" viewBox="0 0 12 12" style="left:4.20px;top:117.62px;width:10.60px;height:10.60px;"><rect x="1" y="3.8" width="10" height="4.6" rx="2.2" transform="rotate(-45 6 6)" fill="#cdcdcd"/><rect x="4.5" y="4.5" width="3" height="3" transform="rotate(-45 6 6)" fill="#4c4c4c"/></svg>
<svg class="ic" viewBox="0 0 12 12" style="left:4.20px;top:130.19px;width:10.60px;height:10.60px;"><path d="M10.4 1.4 4.6 7.4" stroke="#cdcdcd" stroke-width="2" stroke-linecap="round"/><path d="M4.4 7.2C3 7.4 2.6 8.6 1.4 10.4 3.4 10.6 5 9.8 5.2 8.2Z" fill="#cdcdcd"/></svg>
<svg class="ic" viewBox="0 0 12 12" style="left:4.20px;top:142.76px;width:10.60px;height:10.60px;"><path d="M4.6 1.4H7.4L7 5.2H9.8A.8.8 0 0 1 10.6 6V8H1.4V6A.8.8 0 0 1 2.2 5.2H5Z" fill="#cdcdcd"/><rect x="1.4" y="9" width="9.2" height="1.5" fill="#cdcdcd"/></svg>
<svg class="ic" viewBox="0 0 12 12" style="left:4.20px;top:155.33px;width:10.60px;height:10.60px;"><path d="M10.6 1.2 5.4 6.6" stroke="#cdcdcd" stroke-width="1.7" stroke-linecap="round"/><path d="M5 6.6C3.8 6.8 3.6 8 2.4 9.6 4.2 9.8 5.6 9 5.8 7.6Z" fill="#cdcdcd"/><path d="M1.2 5.4A3.4 3.4 0 0 1 5.6 1.6" stroke="#cdcdcd" stroke-width="1"/><path d="M.4 3.6 2.8 4 1.4 6Z" fill="#cdcdcd"/></svg>
<svg class="ic" viewBox="0 0 12 12" style="left:4.20px;top:167.90px;width:10.60px;height:10.60px;"><path d="M6.6 1.8 10.8 5 6.4 9.6H3.4L1.4 8Z" fill="#cdcdcd"/><path d="M3.6 5.4 7.6 8.4" stroke="#4c4c4c" stroke-width=".9"/><path d="M2 10.6H10.4" stroke="#cdcdcd" stroke-width=".9"/></svg>
<svg class="ic" viewBox="0 0 12 12" style="left:4.20px;top:180.47px;width:10.60px;height:10.60px;"><defs><linearGradient id="tg" x1="0" x2="1"><stop offset="0" stop-color="#e6e6e6"/><stop offset="1" stop-color="#4c4c4c"/></linearGradient></defs><rect x="1.2" y="1.8" width="9.6" height="8.4" fill="url(#tg)" stroke="#cdcdcd" stroke-width=".9"/></svg>
<svg class="ic" viewBox="0 0 12 12" style="left:4.20px;top:193.04px;width:10.60px;height:10.60px;"><path d="M6 1.2C7.6 3.8 9.2 5.4 9.2 7.4A3.2 3.2 0 0 1 2.8 7.4C2.8 5.4 4.4 3.8 6 1.2Z" fill="#cdcdcd"/><circle cx="6" cy="7.6" r="1.1" fill="#4c4c4c"/></svg>
<svg class="ic" viewBox="0 0 12 12" style="left:4.20px;top:205.61px;width:10.60px;height:10.60px;"><circle cx="7.2" cy="4.6" r="3" fill="#cdcdcd"/><circle cx="7.2" cy="4.6" r="1.1" fill="#4c4c4c"/><path d="M5 6.8 1.6 10.4" stroke="#cdcdcd" stroke-width="1.7" stroke-linecap="round"/></svg>
<svg class="ic" viewBox="0 0 12 12" style="left:4.20px;top:218.18px;width:10.60px;height:10.60px;"><path d="M1.4 10.6 2.6 5.8 6.6 2.6 9.6 5.6 6.4 9.6Z" stroke="#cdcdcd" stroke-width="1"/><path d="M1.6 10.4 5.2 6.8" stroke="#cdcdcd" stroke-width=".8"/><circle cx="5.6" cy="6.4" r="1" fill="#cdcdcd"/><path d="M7.4 1.6 10.6 4.8" stroke="#cdcdcd" stroke-width="1.6" stroke-linecap="round"/></svg>
<svg class="ic" viewBox="0 0 12 12" style="left:4.20px;top:230.75px;width:10.60px;height:10.60px;"><path d="M1.6 1.4H10.4V4H9.6C9.4 2.8 9 2.4 7.2 2.4V9.2C7.2 9.8 7.6 10 8.6 10V10.8H3.4V10C4.4 10 4.8 9.8 4.8 9.2V2.4C3 2.4 2.6 2.8 2.4 4H1.6Z" fill="#cdcdcd"/></svg>
<svg class="ic" viewBox="0 0 12 12" style="left:4.20px;top:243.32px;width:10.60px;height:10.60px;"><path d="M3.4 .8V10L5.6 7.8 7.2 11.2 8.6 10.6 7 7.2H10Z" fill="#cdcdcd"/></svg>
<svg class="ic" viewBox="0 0 12 12" style="left:4.20px;top:255.89px;width:10.60px;height:10.60px;"><path d="M3.9 2.4H8.1L10.2 6 8.1 9.6H3.9L1.8 6Z" stroke="#cdcdcd" stroke-width="1.1"/></svg>
<svg class="ic" viewBox="0 0 12 12" style="left:4.20px;top:268.46px;width:10.60px;height:10.60px;"><path d="M3.2 6.6V3A.7.7 0 0 1 4.6 3V1.8A.7.7 0 0 1 6 1.8V1.4A.7.7 0 0 1 7.4 1.4V2A.7.7 0 0 1 8.8 2V6L9.8 4.6A.8.8 0 0 1 11 5.6L9 9.4C8.6 10.4 8 11 6.6 11H5.4C3.6 11 3.2 9.6 2.6 8.4L1.4 6.2A.8.8 0 0 1 2.6 5.4Z" fill="#cdcdcd"/></svg>
<svg class="ic" viewBox="0 0 12 12" style="left:4.20px;top:281.03px;width:10.60px;height:10.60px;"><circle cx="5" cy="5" r="2.9" stroke="#cdcdcd" stroke-width="1.1"/><path d="M7.3 7.3 10.2 10.2" stroke="#cdcdcd" stroke-width="1.6" stroke-linecap="round"/></svg>
<svg class="ic" viewBox="0 0 2.2 2.2" style="left:15.00px;top:63.27px;width:2.20px;height:2.20px;"><path d="M2.2 0V2.2H0Z" fill="#bdbdbd"/></svg>
<svg class="ic" viewBox="0 0 2.2 2.2" style="left:15.00px;top:75.84px;width:2.20px;height:2.20px;"><path d="M2.2 0V2.2H0Z" fill="#bdbdbd"/></svg>
<svg class="ic" viewBox="0 0 2.2 2.2" style="left:15.00px;top:88.41px;width:2.20px;height:2.20px;"><path d="M2.2 0V2.2H0Z" fill="#bdbdbd"/></svg>
<svg class="ic" viewBox="0 0 2.2 2.2" style="left:15.00px;top:100.98px;width:2.20px;height:2.20px;"><path d="M2.2 0V2.2H0Z" fill="#bdbdbd"/></svg>
<svg class="ic" viewBox="0 0 2.2 2.2" style="left:15.00px;top:113.55px;width:2.20px;height:2.20px;"><path d="M2.2 0V2.2H0Z" fill="#bdbdbd"/></svg>
<svg class="ic" viewBox="0 0 2.2 2.2" style="left:15.00px;top:126.12px;width:2.20px;height:2.20px;"><path d="M2.2 0V2.2H0Z" fill="#bdbdbd"/></svg>
<svg class="ic" viewBox="0 0 2.2 2.2" style="left:15.00px;top:138.69px;width:2.20px;height:2.20px;"><path d="M2.2 0V2.2H0Z" fill="#bdbdbd"/></svg>
<svg class="ic" viewBox="0 0 2.2 2.2" style="left:15.00px;top:151.26px;width:2.20px;height:2.20px;"><path d="M2.2 0V2.2H0Z" fill="#bdbdbd"/></svg>
<svg class="ic" viewBox="0 0 2.2 2.2" style="left:15.00px;top:163.83px;width:2.20px;height:2.20px;"><path d="M2.2 0V2.2H0Z" fill="#bdbdbd"/></svg>
<svg class="ic" viewBox="0 0 2.2 2.2" style="left:15.00px;top:176.40px;width:2.20px;height:2.20px;"><path d="M2.2 0V2.2H0Z" fill="#bdbdbd"/></svg>
<svg class="ic" viewBox="0 0 2.2 2.2" style="left:15.00px;top:188.97px;width:2.20px;height:2.20px;"><path d="M2.2 0V2.2H0Z" fill="#bdbdbd"/></svg>
<svg class="ic" viewBox="0 0 2.2 2.2" style="left:15.00px;top:201.54px;width:2.20px;height:2.20px;"><path d="M2.2 0V2.2H0Z" fill="#bdbdbd"/></svg>
<svg class="ic" viewBox="0 0 2.2 2.2" style="left:15.00px;top:214.11px;width:2.20px;height:2.20px;"><path d="M2.2 0V2.2H0Z" fill="#bdbdbd"/></svg>
<svg class="ic" viewBox="0 0 2.2 2.2" style="left:15.00px;top:226.68px;width:2.20px;height:2.20px;"><path d="M2.2 0V2.2H0Z" fill="#bdbdbd"/></svg>
<svg class="ic" viewBox="0 0 2.2 2.2" style="left:15.00px;top:239.25px;width:2.20px;height:2.20px;"><path d="M2.2 0V2.2H0Z" fill="#bdbdbd"/></svg>
<svg class="ic" viewBox="0 0 2.2 2.2" style="left:15.00px;top:251.82px;width:2.20px;height:2.20px;"><path d="M2.2 0V2.2H0Z" fill="#bdbdbd"/></svg>
<svg class="ic" viewBox="0 0 2.2 2.2" style="left:15.00px;top:264.39px;width:2.20px;height:2.20px;"><path d="M2.2 0V2.2H0Z" fill="#bdbdbd"/></svg>
<svg class="ic" viewBox="0 0 2.2 2.2" style="left:15.00px;top:50.70px;width:2.20px;height:2.20px;"><path d="M2.2 0V2.2H0Z" fill="#bdbdbd"/></svg>
<svg class="ic" viewBox="0 0 2.2 2.2" style="left:15.00px;top:276.96px;width:2.20px;height:2.20px;"><path d="M2.2 0V2.2H0Z" fill="#bdbdbd"/></svg>
<svg class="ic" viewBox="0 0 9 2.4" style="left:5.00px;top:298.40px;width:9.00px;height:2.40px;"><circle cx="1.2" cy="1.2" r="1" fill="#cdcdcd"/><circle cx="4.5" cy="1.2" r="1" fill="#cdcdcd"/><circle cx="7.8" cy="1.2" r="1" fill="#cdcdcd"/></svg>
<svg class="ic" viewBox="0 0 2.2 2.2" style="left:15.00px;top:302.20px;width:2.20px;height:2.20px;"><path d="M2.2 0V2.2H0Z" fill="#bdbdbd"/></svg>
<svg class="ic" viewBox="0 0 6 6" style="left:2.50px;top:307.00px;width:6.00px;height:6.00px;"><rect x="2" y="2" width="3.4" height="3.4" fill="#fff" stroke="#222" stroke-width=".6"/><rect x=".4" y=".4" width="3.4" height="3.4" fill="#111" stroke="#ddd" stroke-width=".6"/></svg>
<svg class="ic" viewBox="0 0 6 6" style="left:11.00px;top:306.60px;width:6.00px;height:6.00px;"><path d="M1.4 1.2H4.6V4.6" stroke="#cdcdcd" stroke-width="1"/><path d="M2 0 .2 1.2 2 2.4ZM3.4 4 4.6 5.8 5.8 4Z" fill="#cdcdcd"/></svg>
<div class="b" style="left:7.60px;top:321.00px;width:8.60px;height:8.80px;background:#000;border:.8px solid #e6e6e6;box-sizing:border-box"></div>
<div class="b" style="left:2.20px;top:316.00px;width:8.40px;height:8.80px;background:#575757;border:.8px solid #e6e6e6;box-sizing:border-box"></div>
<svg class="ic" viewBox="0 0 11 9" style="left:4.00px;top:334.00px;width:11.00px;height:9.00px;"><rect x=".6" y=".6" width="9.8" height="7.8" rx=".6" stroke="#cdcdcd" stroke-width="1"/><circle cx="5.5" cy="4.5" r="2" stroke="#cdcdcd" stroke-width=".9" stroke-dasharray="1 .7"/></svg>
<svg class="ic" viewBox="0 0 11 9" style="left:4.00px;top:346.00px;width:11.00px;height:9.00px;"><rect x="3" y=".6" width="7.4" height="5.6" rx=".6" stroke="#cdcdcd" stroke-width="1"/><rect x=".6" y="2.8" width="7.4" height="5.6" rx=".6" fill="#4c4c4c" stroke="#cdcdcd" stroke-width="1"/></svg>
<svg class="ic" viewBox="0 0 2.2 2.2" style="left:15.00px;top:354.00px;width:2.20px;height:2.20px;"><path d="M2.2 0V2.2H0Z" fill="#bdbdbd"/></svg>
<div class="b" style="left:642.90px;top:111.20px;width:2.40px;height:198.40px;background:#202020;"></div>
<div class="b" style="left:465.70px;top:111.20px;width:1.60px;height:198.40px;background:#222;"></div>
<div class="b" style="left:467.30px;top:111.20px;width:175.60px;height:8.40px;background:#424242;"></div>
<svg class="ic" viewBox="0 0 3.2 3.2" style="left:470.80px;top:114.00px;width:3.20px;height:3.20px;"><path d="M.3.3 2.9 2.9M2.9.3 .3 2.9" stroke="#b5b5b5" stroke-width=".7"/></svg>
<svg class="ic" viewBox="0 0 4.4 2.8" style="left:634.40px;top:114.20px;width:4.40px;height:2.80px;"><path d="M1.6.2 .4 1.4 1.6 2.6M3.8.2 2.6 1.4 3.8 2.6" stroke="#a8a8a8" stroke-width=".6"/></svg>
<div class="b" style="left:467.00px;top:110.60px;width:1.20px;height:1.20px;background:#e8e8e8;border-radius:50%"></div>
<div class="b" style="left:642.30px;top:110.60px;width:1.20px;height:1.20px;background:#e8e8e8;border-radius:50%"></div>
<div class="b" style="left:467.30px;top:119.60px;width:175.60px;height:16.60px;background:#3c3c3c;"></div>
<div class="b" style="left:467.30px;top:119.60px;width:36.80px;height:16.60px;background:#4f4f4f;"></div>
<svg class="jp" role="img" aria-label="レイヤー" viewBox="0 -880 4000 1000" preserveAspectRatio="none" style="left:473.50px;top:124.80px;width:24.90px;height:6.60px;fill:#ececec;stroke:#ececec;stroke-width:60"><title>レイヤー</title><text x="0" y="0" textLength="4000" lengthAdjust="spacingAndGlyphs">レイヤー</text></svg>
<div class="b" style="left:633.00px;top:125.50px;width:6.00px;height:4.30px;background:repeating-linear-gradient(180deg,#9c9c9c 0 .75px,#5a5a5a .75px 1.18px);"></div>
<div class="b" style="left:467.30px;top:136.20px;width:175.60px;height:51.20px;background:#4f4f4f;"></div>
<div class="b" style="left:470.00px;top:141.50px;width:77.00px;height:10.60px;background:#414141;border-radius:1px"></div>
<svg class="ic" viewBox="0 0 6.4 6.4" style="left:473.20px;top:143.80px;width:6.40px;height:6.40px;"><circle cx="3.8" cy="2.6" r="2" stroke="#d4d4d4" stroke-width=".9"/><path d="M2.4 4 .5 5.9" stroke="#d4d4d4" stroke-width="1.1" stroke-linecap="round"/></svg>
<svg class="jp" role="img" aria-label="種類" viewBox="0 -880 2000 1000" preserveAspectRatio="none" style="left:482.30px;top:144.60px;width:11.90px;height:6.00px;fill:#f0f0f0;stroke:#f0f0f0;stroke-width:55"><title>種類</title><text x="0" y="0" textLength="2000" lengthAdjust="spacingAndGlyphs">種類</text></svg>
<svg class="ic" viewBox="0 0 4.4 3" style="left:541.00px;top:145.60px;width:4.40px;height:3.00px;"><path d="M.4.4 2.2 2.2 4 .4" stroke="#c8c8c8" stroke-width=".9"/></svg>
<svg class="ic" viewBox="0 0 7.4 6.6" style="left:558.00px;top:143.40px;width:7.40px;height:6.60px;"><rect x=".5" y=".5" width="6.4" height="5.6" stroke="#dadada" stroke-width=".9"/><path d="M1.4 5 2.8 3 4 4.4 4.8 3.6 6 5Z" fill="#dadada"/><circle cx="4.8" cy="2" r=".6" fill="#dadada"/></svg>
<svg class="ic" viewBox="0 0 7.2 7.2" style="left:572.80px;top:143.20px;width:7.20px;height:7.20px;"><circle cx="3.6" cy="3.6" r="3" stroke="#dadada" stroke-width=".9"/><path d="M1.5 5.7A3 3 0 0 0 5.7 1.5Z" fill="#dadada"/></svg>
<svg class="ic" viewBox="0 0 6.4 6.8" style="left:588.00px;top:143.40px;width:6.40px;height:6.80px;"><path d="M.3.4H6.1V2.2H5.6C5.5 1.4 5.2 1.2 4.1 1.2V5.4C4.1 5.8 4.4 5.9 5 5.9V6.5H1.4V5.9C2 5.9 2.3 5.8 2.3 5.4V1.2C1.2 1.2 .9 1.4 .8 2.2H.3Z" fill="#dadada"/></svg>
<svg class="ic" viewBox="0 0 7.4 7.4" style="left:601.40px;top:143.20px;width:7.40px;height:7.40px;"><rect x="1.2" y="1.2" width="5" height="5" stroke="#dadada" stroke-width=".8"/><rect x="0" y="0" width="2.2" height="2.2" fill="#dadada"/><rect x="5.2" y="0" width="2.2" height="2.2" fill="#dadada"/><rect x="0" y="5.2" width="2.2" height="2.2" fill="#dadada"/><rect x="5.2" y="5.2" width="2.2" height="2.2" fill="#dadada"/></svg>
<svg class="ic" viewBox="0 0 7.4 8" style="left:616.00px;top:142.80px;width:7.40px;height:8.00px;"><path d="M2 .5H5L6.9 2.4V7.5H2Z" stroke="#dadada" stroke-width=".9"/><rect x="0" y="4" width="3.8" height="4" fill="#dadada"/></svg>
<div class="b" style="left:635.20px;top:142.00px;width:4.80px;height:10.80px;background:#3a3a3a;border-radius:2.4px"></div>
<div class="b" style="left:635.20px;top:142.00px;width:4.80px;height:4.80px;background:#e0e0e0;border-radius:50%"></div>
<div class="b" style="left:470.00px;top:157.60px;width:104.00px;height:10.60px;background:#414141;border-radius:1px"></div>
<svg class="jp" role="img" aria-label="通常" viewBox="0 -880 2000 1000" preserveAspectRatio="none" style="left:473.70px;top:160.80px;width:12.10px;height:6.00px;fill:#f0f0f0;stroke:#f0f0f0;stroke-width:55"><title>通常</title><text x="0" y="0" textLength="2000" lengthAdjust="spacingAndGlyphs">通常</text></svg>
<svg class="ic" viewBox="0 0 4.4 3" style="left:568.60px;top:162.20px;width:4.40px;height:3.00px;"><path d="M.4.4 2.2 2.2 4 .4" stroke="#c8c8c8" stroke-width=".9"/></svg>
<svg class="jp" role="img" aria-label="不透明度" viewBox="0 -880 4000 1000" preserveAspectRatio="none" style="left:578.00px;top:160.80px;width:23.60px;height:6.00px;fill:#e2e2e2;stroke:#e2e2e2;stroke-width:45"><title>不透明度</title><text x="0" y="0" textLength="4000" lengthAdjust="spacingAndGlyphs">不透明度</text></svg>
<svg class="jp" role="img" aria-label=":" viewBox="0 -880 278 1000" preserveAspectRatio="none" style="left:603.20px;top:160.80px;width:2.00px;height:6.00px;fill:#d4d4d4;stroke:#d4d4d4;stroke-width:35"><title>:</title><text x="0" y="0">:</text></svg>
<span class="lt" style="left:609.80px;top:159.70px;font-size:70.0px;line-height:84.0px;color:#f2f2f2;font-weight:400;transform:scale(0.09160,0.100);-webkit-text-stroke:1.50px #f2f2f2;">100%</span>
<div class="b" style="left:607.40px;top:168.20px;width:33.60px;height:0.70px;background:#646464;"></div>
<svg class="ic" viewBox="0 0 4.4 3" style="left:634.60px;top:162.20px;width:4.40px;height:3.00px;"><path d="M.4.4 2.2 2.2 4 .4" stroke="#c8c8c8" stroke-width=".9"/></svg>
<div class="b" style="left:467.30px;top:172.00px;width:175.60px;height:0.80px;background:#3e3e3e;"></div>
<svg class="jp" role="img" aria-label="ロック" viewBox="0 -880 3000 1000" preserveAspectRatio="none" style="left:471.20px;top:176.50px;width:17.20px;height:6.00px;fill:#d4d4d4;stroke:#d4d4d4;stroke-width:35"><title>ロック</title><text x="0" y="0" textLength="3000" lengthAdjust="spacingAndGlyphs">ロック</text></svg>
<svg class="jp" role="img" aria-label=":" viewBox="0 -880 278 1000" preserveAspectRatio="none" style="left:490.00px;top:176.50px;width:2.00px;height:6.00px;fill:#d4d4d4;stroke:#d4d4d4;stroke-width:35"><title>:</title><text x="0" y="0">:</text></svg>
<svg class="ic" viewBox="0 0 7 7" style="left:496.00px;top:176.10px;width:7.00px;height:7.00px;"><rect x=".4" y=".4" width="6.2" height="6.2" stroke="#a6a6a6" stroke-width=".7"/><path d="M.4 3.5H6.6M3.5 .4V6.6" stroke="#a6a6a6" stroke-width=".6"/><rect x=".9" y=".9" width="1.1" height="1.1" fill="#b4b4b4"/><rect x="2" y="2" width="1.1" height="1.1" fill="#b4b4b4"/><rect x="3.9" y="3.9" width="1.1" height="1.1" fill="#b4b4b4"/><rect x="5" y="5" width="1.1" height="1.1" fill="#b4b4b4"/><rect x="3.9" y=".9" width="1.1" height="1.1" fill="#b4b4b4"/><rect x="5" y="2" width="1.1" height="1.1" fill="#b4b4b4"/><rect x=".9" y="3.9" width="1.1" height="1.1" fill="#b4b4b4"/><rect x="2" y="5" width="1.1" height="1.1" fill="#b4b4b4"/></svg>
<svg class="ic" viewBox="0 0 8 8" style="left:508.80px;top:175.80px;width:8.00px;height:8.00px;"><path d="M7.3.7 4 4.2" stroke="#bdbdbd" stroke-width="1.5" stroke-linecap="round"/><path d="M3.9 3.5C2.6 3.7 2.2 4.8 .7 7.4 3 7.6 4.6 6.8 4.9 4.6Z" fill="#bdbdbd"/></svg>
<svg class="ic" viewBox="0 0 12 12" style="left:522.00px;top:175.40px;width:8.20px;height:8.20px;"><path fill="#e2e2e2" d="M6 .3 8.3 3.1H6.75V5.25H8.9V3.7L11.7 6 8.9 8.3V6.75H6.75V8.9H8.3L6 11.7 3.7 8.9H5.25V6.75H3.1V8.3L.3 6 3.1 3.7V5.25H5.25V3.1H3.7Z"/></svg>
<svg class="ic" viewBox="0 0 8.6 8" style="left:535.40px;top:175.60px;width:8.60px;height:8.00px;"><path d="M2 .2V6.2H8.4M.2 1.9H6.4V7.8" stroke="#e4e4e4" stroke-width="1.15"/><path d="M4.6 .5 8 3.6" stroke="#e4e4e4" stroke-width=".9"/></svg>
<svg class="ic" viewBox="0 0 7 8.2" style="left:549.20px;top:175.20px;width:7.00px;height:8.20px;"><rect x=".2" y="3.5" width="6.6" height="4.6" rx=".5" fill="#f0f0f0"/><path d="M1.8 3.8V2.5A1.7 1.7 0 0 1 5.2 2.5V3.8" stroke="#f0f0f0" stroke-width="1.1"/></svg>
<svg class="jp" role="img" aria-label="塗り" viewBox="0 -880 2000 1000" preserveAspectRatio="none" style="left:591.00px;top:176.60px;width:10.80px;height:6.00px;fill:#e2e2e2;stroke:#e2e2e2;stroke-width:45"><title>塗り</title><text x="0" y="0" textLength="2000" lengthAdjust="spacingAndGlyphs">塗り</text></svg>
<svg class="jp" role="img" aria-label=":" viewBox="0 -880 278 1000" preserveAspectRatio="none" style="left:603.20px;top:176.60px;width:2.00px;height:6.00px;fill:#d4d4d4;stroke:#d4d4d4;stroke-width:35"><title>:</title><text x="0" y="0">:</text></svg>
<span class="lt" style="left:609.80px;top:175.60px;font-size:70.0px;line-height:84.0px;color:#f2f2f2;font-weight:400;transform:scale(0.09160,0.100);-webkit-text-stroke:1.50px #f2f2f2;">100%</span>
<div class="b" style="left:607.40px;top:184.20px;width:33.60px;height:0.70px;background:#646464;"></div>
<svg class="ic" viewBox="0 0 4.4 3" style="left:634.60px;top:178.20px;width:4.40px;height:3.00px;"><path d="M.4.4 2.2 2.2 4 .4" stroke="#c8c8c8" stroke-width=".9"/></svg>
<div class="b" style="left:467.30px;top:187.00px;width:175.60px;height:0.80px;background:#3a3a3a;"></div>
<div class="b" style="left:467.30px;top:187.80px;width:175.60px;height:52.20px;background:#4c4c4c;"></div>
<div class="b" style="left:467.30px;top:187.80px;width:17.70px;height:52.20px;background:#474747;"></div>
<div class="b" style="left:472.80px;top:211.00px;width:6.80px;height:6.80px;background:transparent;border:.7px solid #646464;box-sizing:border-box"></div>
<div class="b ck2" style="left:487.9px;top:190.5px;width:32.2px;height:47.2px;box-shadow:0 -0.7px 0 #333"></div>
<svg class="ic" viewBox="0 0 32.2 47.2" style="left:488.00px;top:190.50px;width:32.20px;height:47.20px;">
<path d="M13.8 11.9C9.4 12.9 5 16.2 3.7 19.9 3.3 22.6 6.1 23.9 8.9 22.6" stroke="#27336c" stroke-width="2.2" fill="none"/>
<path d="M16.6 3.2 19.9 4.8 23.8 11.9 25.1 18.9 26.6 26.9 26 34.5 22.1 32.9 18.3 38.3 16.1 40.9 14.4 38.8 13.8 35 10.5 33.4 8.5 28 9.4 23.2 12.7 21 12.7 17.2 14.4 12.4 13.8 7.5Z" fill="#4b5191"/>
<path d="M20.3 6.5 23.3 11.9 24.4 17.2 22.7 18.3 21.4 12.9 19.6 9.2Z" fill="#2c3a78"/>
<path d="M19.6 12.6 22 14 23.4 19.4 21 20.4 19.8 16.6Z" fill="#8e3560"/>
<path d="M20.6 28.6 23.6 27.4 24 31.6 21.6 32.4Z" fill="#5b2a5e"/>
<path d="M14.9 3.8 18.3 3.4 20.3 5.9 20.7 9.7 18.8 11.9 15.5 11.9 13.8 9.2 14.1 5.9Z" fill="#2f3f86"/>
<path d="M16.3 6.5 18.8 6.2 19.2 9.6 17.4 10.6 16 9Z" fill="#c7d1ee"/>
<path d="M14.6 12.4 19 12.6 19.6 16.6 17.6 18 14.8 17Z" fill="#c5323f"/>
<path d="M18.3 20.5 23.3 18.9 25.1 23.7 19.9 28Z" fill="#2a3775"/>
<path d="M12.7 17.8 18.8 17.6 19.4 22.6 15.6 24 12.4 22.8Z" fill="#e6e8f3"/>
<path d="M9.4 23.2 14.4 22.6 15 28 12.7 32.3 10 31.3 8.5 26.9Z" fill="#27346e"/>
<path d="M8.5 27.5 11.1 28 11.6 33.4 9.4 32.9Z" fill="#9a2f52"/>
<path d="M23.3 28 26.2 26.9 26.6 32.9 24.4 35Z" fill="#d5563f"/>
<path d="M14.4 35.6 18.3 33.4 17.7 38.8 16.1 40.7 14.7 39.9Z" fill="#171b42"/>
<path d="M12.7 32.9 24.4 24.2 25.8 26.4 15 35.8Z" fill="#8ecbe9"/>
<path d="M15.4 25.2 18.6 24.4 19 27.4 16 29.2Z" fill="#cfe3f4"/>
</svg>
<svg class="jp" role="img" aria-label="ミク" viewBox="0 -880 2000 1000" preserveAspectRatio="none" style="left:525.60px;top:213.00px;width:10.90px;height:6.00px;fill:#f4f4f4;stroke:#f4f4f4;stroke-width:60"><title>ミク</title><text x="0" y="0" textLength="2000" lengthAdjust="spacingAndGlyphs">ミク</text></svg>
<div class="b" style="left:467.30px;top:239.80px;width:175.60px;height:0.70px;background:#3a3a3a;"></div>
<div class="b" style="left:467.30px;top:240.40px;width:175.60px;height:52.20px;background:#696969;"></div>
<div class="b" style="left:467.30px;top:240.40px;width:17.70px;height:52.20px;background:#5c5c5c;"></div>
<svg class="ic" viewBox="0 0 8 5.4" style="left:472.60px;top:264.40px;width:8.00px;height:5.40px;"><path d="M.3 2.7C1.6 .9 2.8 .3 4 .3S6.4 .9 7.7 2.7C6.4 4.5 5.2 5.1 4 5.1S1.6 4.5 .3 2.7Z" fill="#f0f0f0"/><circle cx="4" cy="2.7" r="1.35" fill="#5c5c5c"/></svg>
<div class="b ck2" style="left:488.5px;top:243.4px;width:31.2px;height:46.6px"></div>
<svg class="ic" viewBox="0 0 35.4 50.3" style="left:486.30px;top:241.50px;width:35.40px;height:50.30px;"><path d="M.5 12V2A1.5 1.5 0 0 1 2 .5H9M26 .5H33.4A1.5 1.5 0 0 1 34.9 2V12M34.9 38V48.3A1.5 1.5 0 0 1 33.4 49.8H26M9 49.8H2A1.5 1.5 0 0 1 .5 48.3V38" stroke="#f2f2f2" stroke-width="1"/><path d="M.5 12V38M34.9 12V38M9 .5H26M9 49.8H26" stroke="#b8b8b8" stroke-width=".7"/></svg>
<svg class="ic" viewBox="0 0 31.2 46.6" style="left:488.50px;top:243.40px;width:31.20px;height:46.60px;"><path d="M16.9 11.5 17.3 11.5 15.2 31.5 14.4 31.8 14.3 25 15.4 18Z" fill="#fff" stroke="#fff" stroke-width=".5"/></svg>
<svg class="ic" viewBox="0 0 7 7.4" style="left:512.60px;top:282.30px;width:7.40px;height:7.80px;"><rect x=".4" y=".4" width="6.2" height="6.6" fill="#f4f4f4" stroke="#555" stroke-width=".6"/><rect x="1.8" y="1.8" width="3.4" height="3.8" fill="none" stroke="#444" stroke-width=".7"/><rect x="2.8" y="2.9" width="1.4" height="1.6" fill="#777"/></svg>
<svg class="jp" role="img" aria-label="多角形 1" viewBox="0 -880 3855 1000" preserveAspectRatio="none" style="left:525.60px;top:264.60px;width:22.70px;height:6.00px;fill:#f6f6f6;stroke:#f6f6f6;stroke-width:60"><title>多角形 1</title><text x="0" y="0" textLength="3855" lengthAdjust="spacingAndGlyphs">多角形 1</text></svg>
<div class="b" style="left:633.80px;top:187.80px;width:9.10px;height:104.80px;background:#4d4d4d;"></div>
<div class="b" style="left:467.30px;top:292.60px;width:175.60px;height:14.40px;background:#4a4a4a;"></div>
<div class="b" style="left:467.30px;top:292.40px;width:175.60px;height:0.70px;background:#3a3a3a;"></div>
<div class="b" style="left:467.30px;top:307.00px;width:175.60px;height:2.60px;background:#373737;"></div>
<svg class="ic" viewBox="0 0 8.2 4" style="left:521.00px;top:298.00px;width:8.20px;height:4.00px;"><rect x=".4" y=".5" width="3.8" height="3" rx="1.5" stroke="#7a7a7a" stroke-width=".8"/><rect x="4" y=".5" width="3.8" height="3" rx="1.5" stroke="#7a7a7a" stroke-width=".8"/></svg>
<svg class="ic" viewBox="0 0 6.6 6" style="left:554.60px;top:296.60px;width:6.60px;height:6.00px;"><rect x=".3" y=".3" width="6" height="5.4" fill="#d6d6d6"/><circle cx="3.3" cy="3.2" r="1.7" fill="#4a4a4a"/></svg>
<svg class="ic" viewBox="0 0 6.4 6.4" style="left:571.40px;top:296.40px;width:6.40px;height:6.40px;"><circle cx="3.2" cy="3.2" r="2.8" stroke="#d6d6d6" stroke-width=".8"/><path d="M1.2 5.2A2.8 2.8 0 0 0 5.2 1.2Z" fill="#d6d6d6"/></svg>
<svg class="ic" viewBox="0 0 7 5.6" style="left:587.60px;top:296.80px;width:7.00px;height:5.60px;"><path d="M.3 .3H2.8L3.6 1.2H6.7V5.3H.3Z" fill="#d6d6d6"/></svg>
<svg class="ic" viewBox="0 0 6 5.6" style="left:604.00px;top:297.00px;width:6.00px;height:5.60px;"><path d="M.4 .4H5.6V5.2H.4Z" stroke="#d6d6d6" stroke-width=".8"/></svg>
<svg class="ic" viewBox="0 0 6 6.6" style="left:620.00px;top:296.40px;width:6.00px;height:6.60px;"><path d="M.2 1.4H5.8M2 1.2V.4H4V1.2M.9 1.6 1.3 6.2H4.7L5.1 1.6" stroke="#d6d6d6" stroke-width=".8"/></svg>
<div class="b" style="left:535.70px;top:292.80px;width:12.80px;height:12.00px;background:#353535;"></div>
<span class="lt" style="left:538.20px;top:294.46px;font-size:74.0px;line-height:88.8px;color:#e6e6e6;font-weight:700;transform:scale(0.10636,0.100);font-style:italic;">fx</span>
<svg class="ic" viewBox="529 286 127 148" style="left:529.00px;top:286.00px;width:127.00px;height:148.00px;"><path fill-rule="evenodd" fill="#e7ae40" d="M530.1 287.6H554.1V299.8H654.8V432.8H530.1ZM535.7 292.8V427.4H649.3V304.8H548.5V292.8Z"/></svg>
<div class="b" style="left:535.70px;top:304.80px;width:113.60px;height:122.60px;background:#ececec;"></div>
<div class="b" style="left:535.70px;top:320.80px;width:113.60px;height:0.80px;background:#d9d9d9;"></div>
<svg class="jp" role="img" aria-label="レイヤー効果..." viewBox="0 -880 6834 1000" preserveAspectRatio="none" style="left:547.30px;top:309.55px;width:45.90px;height:6.50px;fill:#3a3a3a;stroke:#3a3a3a;stroke-width:45"><title>レイヤー効果...</title><text x="0" y="0" textLength="6834" lengthAdjust="spacingAndGlyphs">レイヤー効果...</text></svg>
<svg class="jp" role="img" aria-label="ベベルとエンボス..." viewBox="0 -880 8834 1000" preserveAspectRatio="none" style="left:547.30px;top:326.05px;width:59.30px;height:6.50px;fill:#3a3a3a;stroke:#3a3a3a;stroke-width:45"><title>ベベルとエンボス...</title><text x="0" y="0" textLength="8834" lengthAdjust="spacingAndGlyphs">ベベルとエンボス...</text></svg>
<svg class="jp" role="img" aria-label="境界線..." viewBox="0 -880 3834 1000" preserveAspectRatio="none" style="left:547.30px;top:336.35px;width:25.30px;height:6.50px;fill:#3a3a3a;stroke:#3a3a3a;stroke-width:45"><title>境界線...</title><text x="0" y="0" textLength="3834" lengthAdjust="spacingAndGlyphs">境界線...</text></svg>
<svg class="jp" role="img" aria-label="シャドウ (内側)..." viewBox="0 -880 7810 1000" preserveAspectRatio="none" style="left:547.30px;top:346.65px;width:53.20px;height:6.50px;fill:#3a3a3a;stroke:#3a3a3a;stroke-width:45"><title>シャドウ (内側)...</title><text x="0" y="0" textLength="7810" lengthAdjust="spacingAndGlyphs">シャドウ (内側)...</text></svg>
<svg class="jp" role="img" aria-label="光彩 (内側)..." viewBox="0 -880 5810 1000" preserveAspectRatio="none" style="left:547.30px;top:356.85px;width:40.30px;height:6.50px;fill:#3a3a3a;stroke:#3a3a3a;stroke-width:45"><title>光彩 (内側)...</title><text x="0" y="0" textLength="5810" lengthAdjust="spacingAndGlyphs">光彩 (内側)...</text></svg>
<svg class="jp" role="img" aria-label="サテン..." viewBox="0 -880 3834 1000" preserveAspectRatio="none" style="left:547.30px;top:367.05px;width:25.30px;height:6.50px;fill:#3a3a3a;stroke:#3a3a3a;stroke-width:45"><title>サテン...</title><text x="0" y="0" textLength="3834" lengthAdjust="spacingAndGlyphs">サテン...</text></svg>
<svg class="jp" role="img" aria-label="カラーオーバーレイ..." viewBox="0 -880 9834 1000" preserveAspectRatio="none" style="left:547.30px;top:377.35px;width:66.00px;height:6.50px;fill:#3a3a3a;stroke:#3a3a3a;stroke-width:45"><title>カラーオーバーレイ...</title><text x="0" y="0" textLength="9834" lengthAdjust="spacingAndGlyphs">カラーオーバーレイ...</text></svg>
<div class="b" style="left:535.70px;top:386.40px;width:113.60px;height:9.20px;background:#658ff2;"></div>
<svg class="jp" role="img" aria-label="グラデーションオーバーレイ..." viewBox="0 -880 13834 1000" preserveAspectRatio="none" style="left:547.30px;top:387.65px;width:92.50px;height:6.50px;fill:#fff;stroke:#fff;stroke-width:45"><title>グラデーションオーバーレイ...</title><text x="0" y="0" textLength="13834" lengthAdjust="spacingAndGlyphs">グラデーションオーバーレイ...</text></svg>
<svg class="jp" role="img" aria-label="パターンオーバーレイ..." viewBox="0 -880 10834 1000" preserveAspectRatio="none" style="left:547.30px;top:397.85px;width:72.20px;height:6.50px;fill:#3a3a3a;stroke:#3a3a3a;stroke-width:45"><title>パターンオーバーレイ...</title><text x="0" y="0" textLength="10834" lengthAdjust="spacingAndGlyphs">パターンオーバーレイ...</text></svg>
<svg class="jp" role="img" aria-label="光彩 (外側)..." viewBox="0 -880 5810 1000" preserveAspectRatio="none" style="left:547.30px;top:408.15px;width:40.30px;height:6.50px;fill:#3a3a3a;stroke:#3a3a3a;stroke-width:45"><title>光彩 (外側)...</title><text x="0" y="0" textLength="5810" lengthAdjust="spacingAndGlyphs">光彩 (外側)...</text></svg>
<svg class="jp" role="img" aria-label="ドロップシャドウ..." viewBox="0 -880 8834 1000" preserveAspectRatio="none" style="left:547.30px;top:418.35px;width:59.30px;height:6.50px;fill:#3a3a3a;stroke:#3a3a3a;stroke-width:45"><title>ドロップシャドウ...</title><text x="0" y="0" textLength="8834" lengthAdjust="spacingAndGlyphs">ドロップシャドウ...</text></svg>
</div>
</body></html>
